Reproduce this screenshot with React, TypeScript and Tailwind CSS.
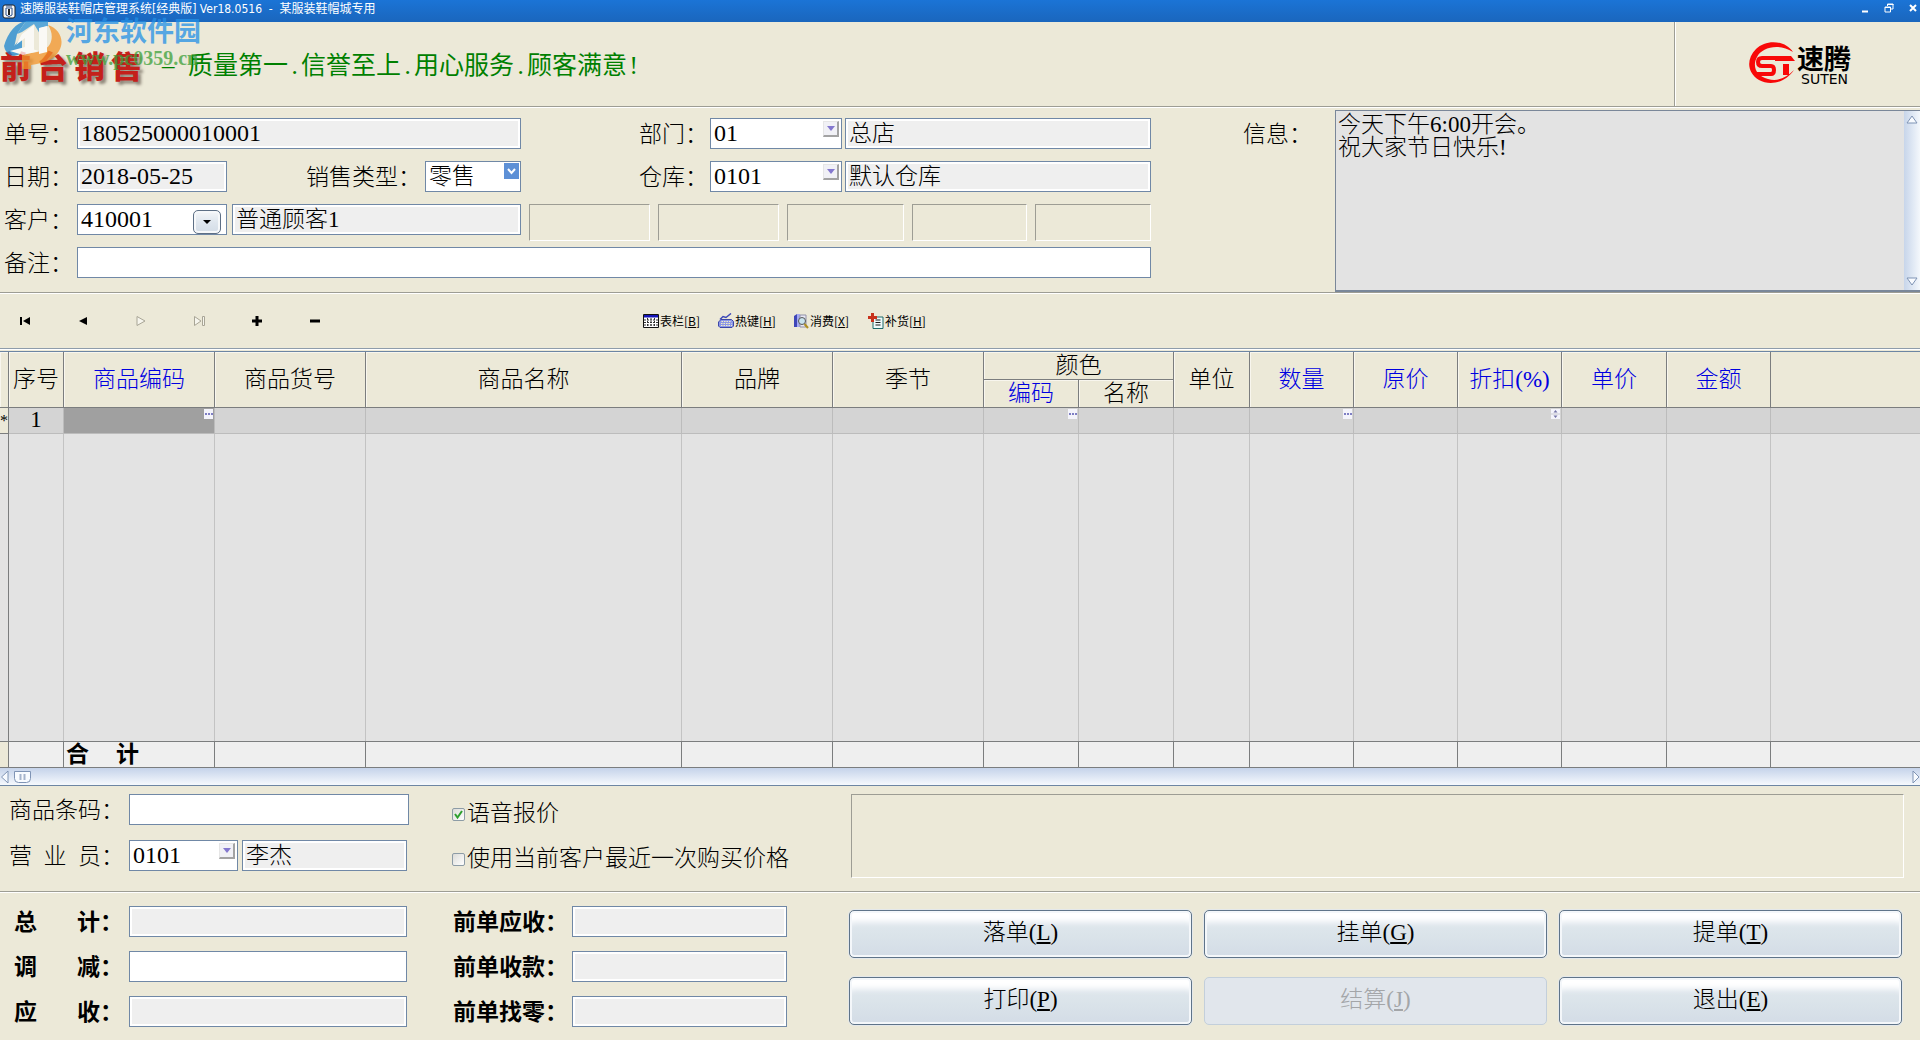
import { Fragment, useState } from 'react'
import type { ReactNode } from 'react'

const fieldBase = 'h-[31px] min-w-0 border border-[#7088a6] px-[3px] text-black outline-none'
const fieldReadonly = 'bg-[#efefef] shadow-[inset_0_0_0_2px_#ffffff]'

type FieldProps = {
  id: string
  label?: string
  value?: string
  readOnly?: boolean
  className: string
}

const Field = ({ id, label, value = '', readOnly, className }: FieldProps) => {
  const [text, setText] = useState(value)

  return (
    <input
      aria-label={label}
      className={`${fieldBase} ${readOnly ? fieldReadonly : 'bg-white'} ${className}`}
      id={id}
      onChange={(e) => setText(e.target.value)}
      readOnly={readOnly}
      type="text"
      value={text}
    />
  )
}

const LookupField = ({ id, value, className }: { id: string; value: string; className: string }) => (
  <div className={`flex h-[31px] border border-[#7088a6] bg-white ${className}`}>
    <input className="w-0 min-w-0 flex-1 px-[3px] pb-0.5 outline-none" defaultValue={value} id={id} type="text" />
    <button
      aria-label="lookup"
      className="mt-0.5 mr-0.5 flex h-4 w-4 items-center justify-center border-t border-r-2 border-b-2 border-l border-t-[#e6e6e6] border-r-[#a3a3a3] border-b-[#a3a3a3] border-l-[#e6e6e6] bg-[#f1f1f6]"
      type="button"
    >
      <svg height="5" viewBox="0 0 8 5" width="8">
        <path d="M0 0h8L4 5z" fill="#8478cf" />
      </svg>
    </button>
  </div>
)

const TitleBar = () => (
  <header className="flex h-[22px] items-center bg-linear-to-b from-[#1b74d6] to-[#1a66bd] pl-0.5 text-white">
    <svg height="15" viewBox="0 0 14 15" width="14">
      <rect fill="#f4f4f4" height="13" rx="2" stroke="#222" width="12" x="1" y="1" />
      <path d="M4 4h6v7q-3 3-6 0z" fill="#fff" stroke="#2a4e8a" />
      <path d="M7 5v6" stroke="#222" strokeWidth="2" />
      <path d="M4 2h6" stroke="#2a4e8a" />
    </svg>
    <h1 className="ml-1 flex-1 pb-1 font-['DejaVu_Sans_Condensed','Noto_Sans_CJK_SC',sans-serif] text-xs leading-4 font-normal whitespace-pre">
      {'速腾服装鞋帽店管理系统[经典版] Ver18.0516  -  某服装鞋帽城专用'}
    </h1>
    <div className="flex items-center gap-3.5 pr-0.5 pb-1.5">
      <button aria-label="minimize" className="h-3 w-2.5" type="button">
        <svg height="10" viewBox="0 0 10 10" width="10">
          <path d="M2 8.500h6" stroke="#fff" strokeWidth="2" />
        </svg>
      </button>
      <button aria-label="restore" className="h-3 w-2.5" type="button">
        <svg fill="none" height="10" stroke="#fff" viewBox="0 0 10 10" width="10">
          <path d="M3.500 3V1h5.500v5H7" />
          <path d="M3 1.500h6.500" />
          <path d="M1 4h5.500v5H1z" />
          <path d="M1 4.500h5.500" />
        </svg>
      </button>
      <button aria-label="close" className="h-3 w-2.5" type="button">
        <svg height="10" viewBox="0 0 10 10" width="10">
          <path d="M2 2l6 6M8 2l-6 6" stroke="#fff" strokeWidth="2" />
        </svg>
      </button>
    </div>
  </header>
)

const Watermark = () => (
  <div className="pointer-events-none absolute top-[-8px] left-1 flex opacity-75">
    <svg className="mt-1.5 shrink-0" height="50" viewBox="0 0 58 50" width="58">
      <path d="M0 26C4 12 12 3 22 1L13 14l-3 14 8 5q-6 4-12 2-5-3-6-9z" fill="#1b86cf" />
      <path d="M22 1h22v5l-8 2v6l-6-10-12 8-5 2z" fill="#2b93d8" />
      <path d="M10 26l8-9v12l-8 2z" fill="#1b86cf" />
      <path d="M44 5c12 4 17 16 11 26-5 9-15 12-28 14v4h-9V34c14-1 24-3 28-10 3-6 2-13-2-19z" fill="#f3942a" />
      <path d="M18 14l12-9v27h-9V18l-9 7z" fill="#fff" />
      <path d="M35 8l8-2v26l-8 2z" fill="#fff" />
      <path d="M6 31l15-4 14 4-16 4z" fill="#fff" />
    </svg>
    <div className="ml-1">
      <p className="font-['Noto_Sans_CJK_SC',sans-serif] text-[27px] leading-8 font-bold whitespace-nowrap text-[#2390e6]">
        河东软件园
      </p>
      <p className="font-['Liberation_Serif',serif] text-xl leading-6 font-bold text-[#3ca03a]">www.pc0359.cn</p>
    </div>
  </div>
)

const slogan = ['质量第一', '信誉至上', '用心服务', '顾客满意']

const Banner = () => (
  <section className="relative flex h-[85px] border-b border-[#9d9d94] shadow-[0_1px_0_#ffffff]">
    <div className="flex flex-1 items-start">
      <h2 className="flex h-[61px] w-[162px] items-end gap-1.5 text-[31px] leading-9 font-black text-[#c4201a] [text-shadow:3px_3px_3px_#8d8578]">
        {['前', '台', '销', '售'].map((char) => (
          <span className="font-['Noto_Sans_CJK_SC',sans-serif]" key={char}>
            {char}
          </span>
        ))}
      </h2>
      <p className="mt-[26px] flex text-[25px] leading-9 font-normal text-[#008000]">
        <span className="w-[26px]">–</span>
        {slogan.map((part, i) => (
          <Fragment key={part}>
            <span>{part}</span>
            <span className="w-[13px] text-center">{i < slogan.length - 1 ? '.' : '!'}</span>
          </Fragment>
        ))}
      </p>
    </div>
    <div className="flex w-[246px] items-start border-l border-[#9d9d94] pt-5 pl-[74px] shadow-[inset_1px_0_0_#ffffff]">
      <svg height="42" viewBox="0 0 46 42" width="46">
        <path
          d="M44 10C36-2 17-3 7 7c-10 10-9 24 3 31 11 6 26 3 35-10-8 8-17 12-26 9C7 34 3 24 8 15 13 5 30 1 44 10z"
          fill="#f80808"
        />
        <path d="M34 16H13q-4 0-4 4t4 4h9q3 0 3 4t-3 4H7" fill="none" stroke="#f80808" strokeWidth="4" />
        <path d="M26 14h16l4 5H26z" fill="#f80808" />
        <path d="M34 22h6v11h-6z" fill="#f80808" />
      </svg>
      <div className="ml-0.5 font-['Noto_Sans_CJK_SC',sans-serif] text-black">
        <p className="text-[27px] leading-[31px] font-bold">速腾</p>
        <p className="pl-1 font-['DejaVu_Sans',sans-serif] text-sm leading-3 font-normal">SUTEN</p>
      </div>
    </div>
  </section>
)

const FormRow = ({ children }: { children: ReactNode }) => (
  <div className="flex h-[43px] items-start leading-[34px]">{children}</div>
)

const OrderForm = () => (
  <section className="flex border-b border-[#9d9d94] shadow-[0_1px_0_#ffffff]">
    <div className="w-[1151px] shrink-0 pt-[11px] pb-0.5">
      <FormRow>
        <label className="w-[77px] pl-1" htmlFor="order-no">
          单号：
        </label>
        <Field className="w-[444px] pb-0.5 text-2xl" id="order-no" readOnly value="180525000010001" />
        <label className="ml-[118px] w-[71px]" htmlFor="department">
          部门：
        </label>
        <LookupField className="w-[132px] text-2xl" id="department" value="01" />
        <Field className="ml-[3px] flex-1" id="department-name" label="部门名称" readOnly value="总店" />
      </FormRow>
      <FormRow>
        <label className="w-[77px] pl-1" htmlFor="order-date">
          日期：
        </label>
        <Field className="w-[150px] pb-0.5 text-2xl" id="order-date" readOnly value="2018-05-25" />
        <label className="ml-[79px] w-[119px]" htmlFor="sale-type">
          销售类型：
        </label>
        <div className="relative w-24">
          <select
            className={`block w-full appearance-none bg-white leading-7 ${fieldBase}`}
            defaultValue="零售"
            id="sale-type"
          >
            <option>零售</option>
            <option>批发</option>
          </select>
          <svg className="pointer-events-none absolute top-0.5 right-0.5" height="16" viewBox="0 0 15 16" width="15">
            <path d="M0 0h15v16H0z" fill="#5d90d6" />
            <path d="M4 6l3.500 4L11 6" fill="none" stroke="#fff" strokeWidth="2" />
          </svg>
        </div>
        <label className="ml-[118px] w-[71px]" htmlFor="warehouse">
          仓库：
        </label>
        <LookupField className="w-[132px] text-2xl" id="warehouse" value="0101" />
        <Field className="ml-[3px] flex-1" id="warehouse-name" label="仓库名称" readOnly value="默认仓库" />
      </FormRow>
      <FormRow>
        <label className="w-[77px] pl-1" htmlFor="customer">
          客户：
        </label>
        <div className="flex h-[31px] w-[150px] border border-[#7088a6] bg-white">
          <input
            className="w-0 min-w-0 flex-1 px-[3px] pb-0.5 text-2xl outline-none"
            defaultValue="410001"
            id="customer"
            type="text"
          />
          <button
            aria-label="customer list"
            className="mt-[5px] mr-[5px] flex h-6 w-7 items-center justify-center rounded-[5px] border border-[#5d6f85] bg-linear-to-b from-[#f5f7f9] via-[#dfe6ee] to-[#d3dce6] shadow-[inset_0_0_0_2px_#f6f8fa]"
            type="button"
          >
            <svg height="4" viewBox="0 0 8 4" width="8">
              <path d="M0 0h8L4 4z" />
            </svg>
          </button>
        </div>
        <Field className="ml-[5px] w-[289px]" id="customer-name" label="客户名称" readOnly value="普通顾客1" />
        <div className="ml-2 grid flex-1 grid-cols-[121fr_122fr_117fr_116fr_116fr] gap-2">
          {[1, 2, 3, 4, 5].map((n) => (
            <div
              className="h-[37px] border border-t-[#9d9d94] border-r-white border-b-white border-l-[#9d9d94]"
              key={n}
            />
          ))}
        </div>
      </FormRow>
      <FormRow>
        <label className="w-[77px] pl-1" htmlFor="remark">
          备注：
        </label>
        <Field className="flex-1" id="remark" />
      </FormRow>
    </div>
    <label className="ml-[92px] w-[92px] shrink-0 pt-[11px] leading-[34px]" htmlFor="message">
      信息：
    </label>
    <div className="mt-[3px] flex min-w-0 flex-1 border border-r-0 border-b-2 border-[#7a8799] bg-[#e3e3e3]">
      <textarea
        className="min-w-0 flex-1 resize-none overflow-hidden px-0.5 pt-0.5 leading-[23px] outline-none"
        defaultValue={'今天下午6:00开会。\n祝大家节日快乐!'}
        id="message"
      />
      <div className="flex w-4 flex-col items-center justify-between bg-linear-to-r from-[#c7d5ea] to-[#f4f8fc] py-1">
        <ScrollArrow d="M6 1l5 7H1z" />
        <ScrollArrow d="M6 8l5-7H1z" />
      </div>
    </div>
  </section>
)

const ScrollArrow = ({ d }: { d: string }) => (
  <svg height="9" viewBox="0 0 12 9" width="12">
    <path d={d} fill="#f8fbff" stroke="#7f94b5" />
  </svg>
)

const navButtons = [
  { label: 'first', icon: <path d="M1 2h2v8H1zM11 2v8L4 6z" /> },
  { label: 'prior', icon: <path d="M10 2v8L2 6z" /> },
  { label: 'next', icon: <path d="M10 6L2 10.500V1.500z" fill="#fff8" stroke="#a8a596" />, disabled: true },
  {
    label: 'last',
    icon: <path d="M8 6L1.500 10.500V1.500zM9.500 1.500h2v9h-2z" fill="#fff8" stroke="#a8a596" />,
    disabled: true,
  },
  { label: 'insert', icon: <path d="M4.500 1h3v3.500H11v3H7.500V11h-3V7.500H1v-3h3.500z" /> },
  { label: 'delete', icon: <path d="M1 4.500h10v3H1z" /> },
]

const tools = [
  {
    label: '表栏',
    hotkey: 'B',
    icon: (
      <>
        <path d="M.5 1.500h15v13H.5z" fill="#fff" stroke="#111" />
        <path d="M1 2h14v2.500H1z" fill="#1414b8" />
        <path d="M1 7h14M1 9.500h14M1 12h14M4.500 5v9M8 5v9M11.500 5v9" stroke="#333" strokeDasharray="2 1" />
      </>
    ),
  },
  {
    label: '热键',
    hotkey: 'H',
    icon: (
      <>
        <path d="M2 6.500l3-3 3 1 5-4" fill="none" stroke="#3c48b8" strokeWidth="1.500" />
        <path d="M3 6.500h10.500l2 2V13l-1.500 1.500H2L.5 13V9z" fill="#8d97e8" stroke="#3c48a8" />
        <path d="M3.500 8.500h10M3 10.500h10.500M3 12.500h11" stroke="#f4f0c0" strokeDasharray="1.500 1" />
      </>
    ),
  },
  {
    label: '消费',
    hotkey: 'X',
    icon: (
      <>
        <path d="M1 3l3-2v13H1z" fill="#3f46b8" />
        <path d="M4 1h3v13H4z" fill="#a4a9f0" />
        <path d="M7 2h6v12H7z" fill="#e8e8f4" stroke="#9090a8" />
        <circle cx="9" cy="8" fill="#c9e4ee" r="3.500" stroke="#555" />
        <path d="M11.500 11l3.500 4" stroke="#b09020" strokeWidth="2" />
      </>
    ),
  },
  {
    label: '补货',
    hotkey: 'H',
    icon: (
      <>
        <path d="M5 4h10v11.500H5z" fill="#eefafa" stroke="#1d6a6a" />
        <path d="M7.500 7h5M7.500 9.500h5M7.500 12h5" stroke="#1a1a1a" />
        <path d="M3 0h3v3h3v3H6v3H3V6H0V3h3z" fill="#c8321c" />
      </>
    ),
  },
]

const Toolbar = () => (
  <nav className="flex h-14 items-center border-b border-[#8e9cab] pl-3.5 shadow-[0_1px_0_#ffffff]">
    <div className="flex w-[629px] gap-9">
      {navButtons.map(({ label, icon, disabled }) => (
        <button
          aria-label={label}
          className="flex h-6 w-[22px] items-center justify-center"
          disabled={disabled}
          key={label}
          type="button"
        >
          <svg height="12" viewBox="0 0 12 12" width="12">
            {icon}
          </svg>
        </button>
      ))}
    </div>
    {tools.map(({ label, hotkey, icon }) => (
      <button
        className="flex w-[75px] items-center gap-px font-['Noto_Sans_CJK_SC',sans-serif] text-xs leading-4 font-normal"
        key={label}
        type="button"
      >
        <svg height="16" viewBox="0 0 16 16" width="16">
          {icon}
        </svg>
        <span>
          {label}[<u>{hotkey}</u>]
        </span>
      </button>
    ))}
  </nav>
)

const columns = [
  { name: '序号', width: 'w-[55px]' },
  { name: '商品编码', width: 'w-[151px]', blue: true },
  { name: '商品货号', width: 'w-[151px]' },
  { name: '商品名称', width: 'w-[316px]' },
  { name: '品牌', width: 'w-[151px]' },
  { name: '季节', width: 'w-[151px]' },
  { name: '颜色编码', width: 'w-[95px]' },
  { name: '颜色名称', width: 'w-[95px]' },
  { name: '单位', width: 'w-[76px]' },
  { name: '数量', width: 'w-[104px]', blue: true },
  { name: '原价', width: 'w-[104px]', blue: true },
  { name: '折扣(%)', width: 'w-[104px]', blue: true },
  { name: '单价', width: 'w-[105px]', blue: true },
  { name: '金额', width: 'w-[104px]', blue: true },
]

const HeadCell = ({ name, blue, span = 2 }: { name: string; blue?: boolean; span?: number }) => (
  <th
    className={`border-r border-b border-[#7b7d7e] p-0 font-light shadow-[inset_1px_1px_0_#f8f6ee] ${blue ? 'text-[#0000e0]' : 'text-black'}`}
    rowSpan={span}
  >
    {name}
  </th>
)

const CellButton = ({ spin }: { spin?: boolean }) => (
  <button aria-label={spin ? 'spin' : 'more'} className="mt-px mr-px ml-auto block h-2.5 w-[9px]" type="button">
    <svg className="block" height="10" viewBox="0 0 9 10" width="9">
      <path d="M0 0h9v10H0z" fill="#f4f4fb" />
      {spin ? (
        <>
          <path d="M4.500 1l2 2.500h-4zM4.500 9l2-2.500h-4z" fill="#7474a8" />
          <path d="M0 5h9" stroke="#c8c8d0" />
        </>
      ) : (
        <path d="M1 4h2v2H1zM4 4h2v2H4zM7 4h2v2H7z" fill="#7f7fc4" />
      )}
    </svg>
  </button>
)

const cellButtons: Record<string, ReactNode> = {
  序号: '1',
  商品编码: <CellButton />,
  颜色编码: <CellButton />,
  数量: <CellButton />,
  '折扣(%)': <CellButton spin />,
}

const ItemsTable = () => (
  <section className="mt-0.5 border-t border-[#6d86a3]">
    <table className="w-full table-fixed border-separate border-spacing-0 bg-[#e3e3e3] text-center leading-6">
      <colgroup>
        <col className="w-[9px]" />
        {columns.map(({ name, width }) => (
          <col className={width} key={name} />
        ))}
        <col />
      </colgroup>
      <thead className="bg-[#ece9d8]">
        <tr className="h-7">
          <HeadCell name="" />
          {columns.slice(0, 6).map(({ name, blue }) => (
            <HeadCell blue={blue} key={name} name={name} />
          ))}
          <th
            className="border-r border-b border-[#7b7d7e] p-0 font-light shadow-[inset_1px_1px_0_#f8f6ee]"
            colSpan={2}
          >
            颜色
          </th>
          {columns.slice(8).map(({ name, blue }) => (
            <HeadCell blue={blue} key={name} name={name} />
          ))}
          <th className="border-b border-[#7b7d7e] p-0" rowSpan={2} />
        </tr>
        <tr className="h-7">
          <HeadCell blue name="编码" span={1} />
          <HeadCell name="名称" span={1} />
        </tr>
      </thead>
      <tbody>
        <tr className="h-[26px] bg-[#d4d4d4]">
          <td className="border-r border-b border-[#7b7d7e] bg-[#ece9d8] p-0 text-base leading-4">*</td>
          {columns.map(({ name }, i) => (
            <td
              className={`border-r border-b border-[#bcbcbc] p-0 align-top ${i === 1 ? 'bg-[#a0a0a0]' : ''}`}
              key={name}
            >
              {cellButtons[name]}
            </td>
          ))}
          <td className="border-b border-[#bcbcbc] p-0" />
        </tr>
        <tr className="h-[307px]">
          <td className="border-r border-[#7b7d7e] p-0" />
          {columns.map(({ name }) => (
            <td className="border-r border-[#c3c3c3] p-0" key={name} />
          ))}
          <td className="p-0" />
        </tr>
      </tbody>
      <tfoot className="bg-[#efefef]">
        <tr className="h-[27px]">
          <td className="border-y border-r border-[#7b7d7e] bg-[#ece9d8] p-0" />
          {columns.map(({ name }, i) => (
            <td className="border-y border-r border-[#7b7d7e] p-0 font-bold" key={name}>
              {i === 1 && (
                <div className="flex gap-[27px] pl-0.5">
                  <span>合</span>
                  <span>计</span>
                </div>
              )}
            </td>
          ))}
          <td className="border-y border-[#7b7d7e] p-0" />
        </tr>
      </tfoot>
    </table>
    <div className="flex h-[18px] items-center border-b border-[#6d86a3] bg-linear-to-b from-[#c5d3ea] to-[#f6f9fd]">
      <svg height="14" viewBox="0 0 32 14" width="32">
        <path d="M8 1v12L1.500 7z" fill="#f8fbff" stroke="#7f94b5" />
        <path d="M14.500 1.500h16v7q0 4-4 4h-8q-4 0-4-4z" fill="#f8fbff" stroke="#7f94b5" />
        <path d="M20.500 4v6M24.500 4v6" stroke="#a5b4cc" strokeWidth="2" />
      </svg>
      <div className="flex-1" />
      <svg height="14" viewBox="0 0 8 14" width="8">
        <path d="M1 1v12l6-6z" fill="#f8fbff" stroke="#7f94b5" />
      </svg>
    </div>
  </section>
)

const SpreadLabel = ({ chars, htmlFor, className }: { chars: string; htmlFor: string; className: string }) => (
  <label className={`flex ${className}`} htmlFor={htmlFor}>
    <span className="flex flex-1 justify-between">
      {[...chars].map((char) => (
        <span key={char}>{char}</span>
      ))}
    </span>
    <span className="w-[23px]">：</span>
  </label>
)

const CheckBox = ({ id, label, defaultChecked }: { id: string; label: string; defaultChecked?: boolean }) => (
  <div className="flex items-center gap-0.5">
    <div className="relative flex">
      <input
        className="peer h-[13px] w-[13px] appearance-none rounded-xs border border-[#8d9ca6] bg-linear-to-br from-[#dcdcd8] to-white"
        defaultChecked={defaultChecked}
        id={id}
        type="checkbox"
      />
      <svg
        className="pointer-events-none absolute inset-0 hidden peer-checked:block"
        height="13"
        viewBox="0 0 13 13"
        width="13"
      >
        <path d="M3 6l2.500 3.500L10 3" fill="none" stroke="#2ea02e" strokeWidth="2" />
      </svg>
    </div>
    <label className="leading-8" htmlFor={id}>
      {label}
    </label>
  </div>
)

const EntryPanel = () => (
  <section className="flex h-[106px] border-b border-[#9d9d94] pt-2 pl-[9px] shadow-[0_1px_0_#ffffff]">
    <div className="flex w-[443px] flex-col gap-[15px] leading-[34px]">
      <div className="flex h-[31px]">
        <label className="w-[120px]" htmlFor="barcode">
          商品条码：
        </label>
        <Field className="w-[280px]" id="barcode" />
      </div>
      <div className="flex h-[31px]">
        <SpreadLabel chars="营业员" className="mr-[5px] w-[115px]" htmlFor="clerk" />
        <LookupField className="w-[109px] text-2xl" id="clerk" value="0101" />
        <Field className="ml-1 w-[165px]" id="clerk-name" label="营业员姓名" readOnly value="李杰" />
      </div>
    </div>
    <div className="flex w-[399px] flex-col gap-[13px] pt-1">
      <CheckBox defaultChecked id="voice" label="语音报价" />
      <CheckBox id="last-price" label="使用当前客户最近一次购买价格" />
    </div>
    <div className="mr-4 h-[84px] flex-1 border border-t-[#9d9d94] border-r-white border-b-white border-l-[#9d9d94]" />
  </section>
)

const totals = [
  { left: '总计', right: '前单应收', readOnly: true },
  { left: '调减', right: '前单收款', readOnly: false },
  { left: '应收', right: '前单找零', readOnly: true },
]

const actions = [
  { label: '落单', hotkey: 'L' },
  { label: '挂单', hotkey: 'G' },
  { label: '提单', hotkey: 'T' },
  { label: '打印', hotkey: 'P' },
  { label: '结算', hotkey: 'J', disabled: true },
  { label: '退出', hotkey: 'E' },
]

const Checkout = () => (
  <section className="flex pt-3.5 pb-[13px]">
    <div className="flex w-[849px] shrink-0 flex-col gap-3.5 pl-3.5 leading-[34px]">
      {totals.map(({ left, right, readOnly }, i) => (
        <div className="flex h-[31px]" key={left}>
          <SpreadLabel chars={left} className="mr-[6px] w-[109px] font-bold" htmlFor={`total-${i}`} />
          <Field className="w-[278px]" id={`total-${i}`} readOnly={readOnly} />
          <label className="ml-[46px] w-[119px] font-bold" htmlFor={`prev-${i}`}>
            {right}：
          </label>
          <Field className="w-[215px]" id={`prev-${i}`} readOnly />
        </div>
      ))}
    </div>
    <div className="mt-1 mr-[18px] grid flex-1 grid-cols-3 content-start gap-x-3 gap-y-[19px]">
      {actions.map(({ label, hotkey, disabled }) => (
        <button
          className="h-12 rounded-[5px] border border-[#5f7489] bg-linear-to-b from-[#e3e9f0] via-[#dbe4ea] to-[#d3dce6] from-0% via-50% to-100% pb-0.5 shadow-[inset_0_0_0_2px_#f4f7fa,inset_0_15px_6px_-4px_#ffffff,0_0_0_1px_#e4e8ea] disabled:border-[#c3cfdb] disabled:bg-[#e1e6ec] disabled:bg-none disabled:text-[#a3a5a8] disabled:shadow-none"
          disabled={disabled}
          key={label}
          type="button"
        >
          {label}(<u>{hotkey}</u>)
        </button>
      ))}
    </div>
  </section>
)

const App = () => (
  <main className="min-h-screen bg-[#ece9d8] font-['Liberation_Serif','Noto_Sans_CJK_SC',serif] text-[23px] font-light text-black">
    <TitleBar />
    <div className="relative">
      <Banner />
      <Watermark />
    </div>
    <OrderForm />
    <Toolbar />
    <ItemsTable />
    <EntryPanel />
    <Checkout />
  </main>
)

export default App
